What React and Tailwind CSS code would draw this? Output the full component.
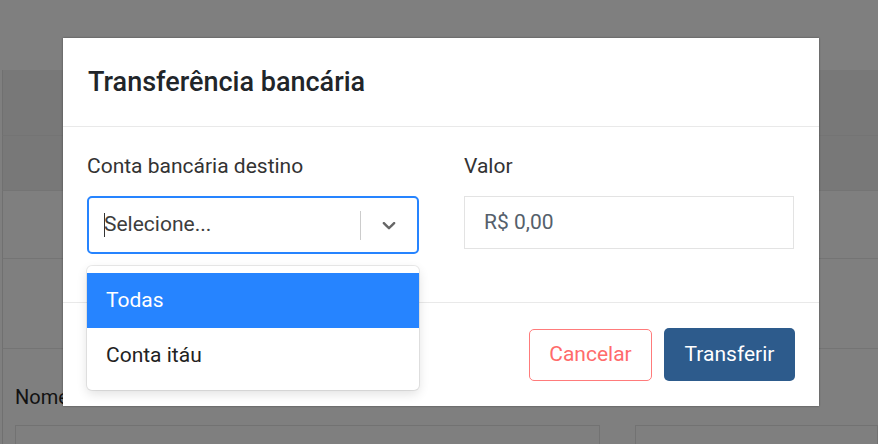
import { useState } from "react";

function Chevron() {
    return (
        <svg width="22" height="22" viewBox="0 0 20 20" fill="#666">
            <path d="M4.516 7.548c0.436-0.446 1.043-0.481 1.576 0l3.908 3.747 3.908-3.747c0.533-0.481 1.141-0.446 1.574 0 0.436 0.445 0.408 1.197 0 1.615-0.406 0.418-4.695 4.502-4.695 4.502-0.217 0.223-0.502 0.335-0.787 0.335s-0.57-0.112-0.789-0.335c0 0-4.287-4.084-4.695-4.502s-0.436-1.17 0-1.615z" />
        </svg>
    );
}

export default function App() {
    const [hover] = useState(0);
    const options = ["Todas", "Conta itáu"];

    return (
        <div
            className="relative w-[878px] h-[444px] overflow-hidden bg-[#7f7f7f]"
            style={{ fontFamily: "Roboto, 'Liberation Sans', sans-serif" }}
        >
            {/* dimmed page behind the modal */}
            <div className="h-[70px] bg-[#7f7f7f]" />
            <div className="h-[65px] bg-[#787878] border-l border-[#707070] ml-[2px]" />
            <div className="h-[55px] bg-[#787878] border-t border-[#747474] ml-[2px] border-l border-l-[#707070]" />
            <div className="h-[68px] border-t border-[#747474] ml-[2px] border-l border-l-[#707070]" />
            <div className="h-[90px] border-t border-[#747474] ml-[2px] border-l border-l-[#707070]" />
            <div className="border-t border-[#747474] pt-[38px] pl-[12px] ml-[2px] border-l border-l-[#707070]">
                <div className="text-[20px] text-[#121212] leading-none">Nome</div>
                <div className="flex gap-[35px] mt-[18px]">
                    <div className="w-[585px] h-[40px] border border-[#727272]" />
                    <div className="flex-1 h-[40px] border border-[#727272]" />
                </div>
            </div>

            {/* modal */}
            <div className="absolute left-[63px] top-[38px] w-[756px] h-[368px] bg-white shadow-[0_0_2px_rgba(0,0,0,0.4)] flex flex-col">
                <div className="h-[89px] px-[25px] flex items-center border-b border-[#e9e9e9]">
                    <h2 className="text-[27px] font-medium text-[#212529]">
                        Transferência bancária
                    </h2>
                </div>

                <div className="h-[176px] px-[24px] pt-[27px] flex gap-[45px] border-b border-[#e9e9e9]">
                    <div className="w-[332px]">
                        <div className="text-[21px] text-[#333] leading-[25px]">Conta bancária destino</div>
                        <div className="relative mt-[17px]">
                            <div className="h-[58px] border-2 border-[#2684ff] rounded-[5px] flex items-center">
                                <div className="flex-1 flex items-center pl-[15px]">
                                    <span className="w-px h-[24px] bg-[#333] -mr-px" />
                                    <span className="text-[21px] text-[#3d3d3d]">Selecione...</span>
                                </div>
                                <span className="w-px h-[29px] bg-[#ccc]" />
                                <div className="w-[56px] flex justify-center">
                                    <Chevron />
                                </div>
                            </div>
                            <div className="absolute left-0 right-0 top-[70px] bg-white rounded-[5px] shadow-[0_0_0_1px_rgba(0,0,0,0.08),0_4px_11px_rgba(0,0,0,0.12)] pt-[7px] pb-[7px] z-10">
                                {options.map((o, i) => (
                                    <div
                                        key={o}
                                        className={
                                            i === hover
                                                ? "h-[55px] px-[19px] flex items-center text-[21px] bg-[#2684ff] text-white"
                                                : "h-[55px] px-[19px] flex items-center text-[21px] text-[#222]"
                                        }
                                    >
                                        {o}
                                    </div>
                                ))}
                            </div>
                        </div>
                    </div>

                    <div className="w-[330px]">
                        <div className="text-[21px] text-[#333] leading-[25px]">Valor</div>
                        <div className="mt-[17px] h-[53px] border border-[#e3e3e3] flex items-center px-[19px] text-[21px] text-[#55606b]">
                            R$ 0,00
                        </div>
                    </div>
                </div>

                <div className="flex-1 flex items-center justify-end gap-[12px] pr-[24px]">
                    <button className="w-[123px] h-[52px] border border-[#ff7b7b] rounded-[5px] text-[21px] text-[#ff6b6b]">
                        Cancelar
                    </button>
                    <button className="w-[131px] h-[53px] bg-[#2d5b8c] rounded-[5px] text-[21px] text-white">
                        Transferir
                    </button>
                </div>
            </div>
        </div>
    );
}
